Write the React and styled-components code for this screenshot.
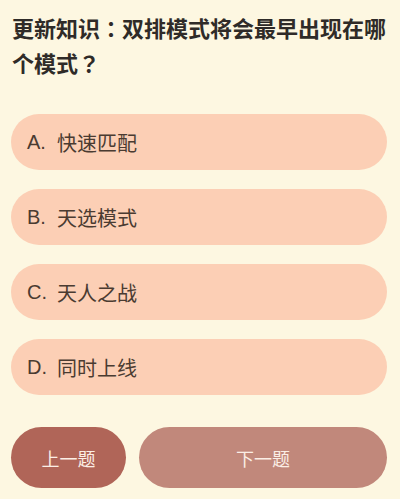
import styled, { createGlobalStyle } from "styled-components";

const GlobalStyle = createGlobalStyle`
  html, body {
    margin: 0;
    padding: 0;
    background: #fdf7e1;
  }
  * { box-sizing: border-box; }
`;

const Page = styled.div`
  width: 400px;
  height: 499px;
  background: #fdf7e1;
  padding: 11px 12px 0 11px;
  font-family: "Liberation Sans", "Noto Sans CJK SC", sans-serif;
  display: flex;
  flex-direction: column;
`;

const Question = styled.h1`
  margin: 0 0 0 1px;
  height: 64px;
  font-size: 22px;
  line-height: 32px;
  font-weight: bold;
  color: #2f2b28;
`;

// full-width punctuation, centred in its cell like the reference
const Punct = styled.span`
  font-family: "Noto Sans CJK JP", sans-serif;
`;

const OptionList = styled.div`
  margin-top: 39px;
  display: flex;
  flex-direction: column;
  gap: 19px;
  padding-right: 1px;
`;

const Option = styled.div`
  height: 56px;
  border-radius: 28px;
  background: #fccfb5;
  display: flex;
  align-items: center;
  padding-left: 16px;
  font-size: 20px;
  color: #4a3b31;
`;

const Letter = styled.span`
  width: 30px;
`;

const Footer = styled.div`
  margin-top: 32px;
  display: flex;
  gap: 13px;
  padding-right: 1px;
`;

const NavButton = styled.button`
  height: 61px;
  border: none;
  border-radius: 31px;
  background: ${(p) => (p.$primary ? "#b06558" : "#c1887b")};
  color: #fbeee6;
  font-family: "Liberation Sans", "Noto Sans CJK SC", sans-serif;
  font-size: 18px;
  flex: ${(p) => (p.$primary ? "0 0 115px" : "1")};
`;

const options = [
  ["A.", "快速匹配"],
  ["B.", "天选模式"],
  ["C.", "天人之战"],
  ["D.", "同时上线"],
];

const App = () => {
  return (
    <>
      <GlobalStyle />
      <Page>
        <Question>
          更新知识<Punct>：</Punct>双排模式将会最早出现在哪个模式<Punct>？</Punct>
        </Question>
        <OptionList>
          {options.map(([l, t]) => (
            <Option key={l}>
              <Letter>{l}</Letter>
              {t}
            </Option>
          ))}
        </OptionList>
        <Footer>
          <NavButton $primary>上一题</NavButton>
          <NavButton>下一题</NavButton>
        </Footer>
      </Page>
    </>
  );
};

export default App;
